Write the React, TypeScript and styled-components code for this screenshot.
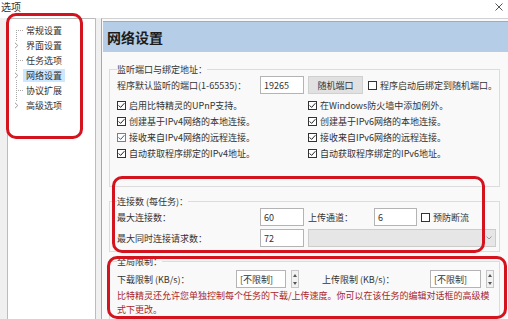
import React from "react";
import styled, { createGlobalStyle, css } from "styled-components";

const GlobalStyle = createGlobalStyle`
  html, body {
    margin: 0;
    padding: 0;
    background: #fff;
  }
  body {
    font-family: "Noto Sans CJK SC", "Noto Sans", sans-serif;
  }
`;

const Window = styled.div`
  position: relative;
  width: 508px;
  height: 319px;
  overflow: hidden;
  background: #f0f0f0;
  color: #222;
  font-size: 9px;
  font-family: "Noto Sans CJK SC", "Noto Sans", sans-serif;
`;

const TitleBar = styled.div`
  height: 18px;
  display: flex;
  justify-content: space-between;
  align-items: flex-start;
  padding: 1px 5px 0 1px;
  box-sizing: border-box;
  background: #fff;
`;

const TitleText = styled.span`
  font-size: 10px;
  line-height: 11px;
  color: #333;
`;

const CloseIcon = styled.svg`
  margin-top: 2px;
`;

const Body = styled.div`
  display: flex;
  gap: 5px;
  height: 301px;
  padding-left: 7px;
`;

const TreePanel = styled.div`
  width: 89px;
  flex: none;
  box-sizing: border-box;
  background: #fff;
  border: 1px solid #bcbcbc;
  border-bottom: none;
  padding-top: 4px;
`;

const TreeList = styled.ul`
  position: relative;
  list-style: none;
  margin: 0;
  padding: 0;
  color: #333;

  &::before {
    content: "";
    position: absolute;
    left: 8px;
    top: 7px;
    height: 75px;
    border-left: 1px dotted #a8a8a8;
  }
`;

const TreeItem = styled.li<{ $leaf?: boolean }>`
  position: relative;
  height: 15px;
  display: flex;
  align-items: center;
  padding-left: 15px;

  ${(p) =>
    p.$leaf &&
    css`
      &::before {
        content: "";
        position: absolute;
        left: 8px;
        top: 7px;
        width: 7px;
        border-top: 1px dotted #a8a8a8;
      }
    `}
`;

const Expander = styled.svg`
  position: absolute;
  left: 6px;
  top: 4px;
  background: #fff;
`;

const ItemText = styled.span<{ $selected?: boolean }>`
  padding: 0 3px;
  line-height: 13px;
  white-space: nowrap;
  background: ${(p) => (p.$selected ? "#cce8ff" : "transparent")};
`;

const RightPanel = styled.div`
  flex: 1;
  background: #f9f9f9;
  border-left: 1px solid #a9a9a9;
  border-top: 1px solid #d2d2d2;
  padding: 2px 0 0 1px;
`;

const Header = styled.div`
  height: 31px;
  box-sizing: border-box;
  display: flex;
  align-items: center;
  padding-left: 4px;
  background: #b6cde7;
  border-top: 1px solid #94adc8;
  font-size: 14px;
  font-weight: bold;
  color: #1b1b1b;
`;

const Content = styled.div`
  padding: 11px 8px 0 6px;
`;

const Group = styled.fieldset<{ $mt?: number; $pb?: number }>`
  margin: ${(p) => p.$mt ?? 0}px 0 0 0;
  padding: 0 0 ${(p) => p.$pb ?? 4}px 7px;
  min-width: 0;
  border: 1px solid #dcdcdc;
`;

const Legend = styled.legend`
  padding: 0;
  line-height: 13px;
  color: #333;
`;

const FormRow = styled.div<{ $mt?: number }>`
  display: flex;
  align-items: center;
  height: 18px;
  margin-top: ${(p) => p.$mt ?? 0}px;
`;

const Label = styled.span<{ $w: number; $ml?: number }>`
  width: ${(p) => p.$w}px;
  margin-left: ${(p) => p.$ml ?? 0}px;
  flex: none;
  white-space: nowrap;
  color: #333;
`;

const TextBox = styled.div<{ $w: number; $ml?: number }>`
  width: ${(p) => p.$w}px;
  margin-left: ${(p) => p.$ml ?? 0}px;
  height: 18px;
  flex: none;
  box-sizing: border-box;
  display: flex;
  align-items: center;
  padding-left: 3px;
  background: #fff;
  border: 1px solid #b4b4b4;
  color: #333;
`;

const PushButton = styled.div`
  width: 55px;
  height: 18px;
  margin-left: 4px;
  flex: none;
  box-sizing: border-box;
  display: flex;
  align-items: center;
  justify-content: center;
  background: #e1e1e1;
  border: 1px solid #d0d0d0;
  color: #333;
`;

const ComboBox = styled.div`
  width: 188px;
  height: 18px;
  margin-left: 4px;
  box-sizing: border-box;
  display: flex;
  align-items: center;
  justify-content: flex-end;
  padding-right: 3px;
  background: #e6e6e6;
  border: 1px solid #cccccc;
`;

const Spinner = styled.div`
  width: 8px;
  height: 18px;
  margin-left: 5px;
  flex: none;
  box-sizing: border-box;
  display: flex;
  flex-direction: column;
  align-items: center;
  justify-content: space-around;
  background: #f2f2f2;
  border: 1px solid #c6c6c6;
`;

const CheckGrid = styled.div`
  display: grid;
  grid-template-columns: 191px 1fr;
  grid-auto-rows: 16px;
  align-items: center;
  margin-top: 3px;
`;

const CheckItem = styled.label<{ $ml?: number }>`
  display: flex;
  align-items: center;
  gap: 3px;
  margin-left: ${(p) => p.$ml ?? 0}px;
  white-space: nowrap;
  color: #333;
`;

const Box = styled.span<{ $hot?: boolean }>`
  width: 9px;
  height: 9px;
  flex: none;
  box-sizing: border-box;
  display: flex;
  align-items: center;
  justify-content: center;
  background: #fff;
  border: 1px solid ${(p) => (p.$hot ? "#3c8fd6" : "#333")};
`;

const Note = styled.p`
  margin: 1px 0 0 0;
  line-height: 14px;
  color: #a8262b;
  white-space: nowrap;
`;

const Callout = styled.div<{ $x: number; $y: number; $w: number; $h: number }>`
  position: absolute;
  left: ${(p) => p.$x}px;
  top: ${(p) => p.$y}px;
  width: ${(p) => p.$w}px;
  height: ${(p) => p.$h}px;
  box-sizing: border-box;
  border: 3px solid #d3131d;
  border-radius: 10px;
  pointer-events: none;
`;

type CheckProps = { label: string; checked?: boolean; hot?: boolean; ml?: number };

const Check = ({ label, checked = true, hot, ml }: CheckProps) => (
  <CheckItem $ml={ml}>
    <Box $hot={hot}>
      {checked && (
        <svg width="7" height="7" viewBox="0 0 7 7">
          <path d="M0.6 3.4 L2.6 5.4 L6.4 1.2" fill="none" stroke={hot ? "#1f5f9e" : "#222"} strokeWidth="1" />
        </svg>
      )}
    </Box>
    {label}
  </CheckItem>
);

const SpinArrows = () => (
  <Spinner>
    <svg width="4" height="3" viewBox="0 0 4 3">
      <path d="M2 0 L4 3 L0 3 Z" fill="#555" />
    </svg>
    <svg width="4" height="3" viewBox="0 0 4 3">
      <path d="M0 0 L4 0 L2 3 Z" fill="#555" />
    </svg>
  </Spinner>
);

const Chevron = () => (
  <Expander width="5" height="7" viewBox="0 0 5 7">
    <path d="M1 0.8 L3.8 3.5 L1 6.2" fill="none" stroke="#9a9a9a" strokeWidth="1" />
  </Expander>
);

const treeItems = [
  { label: "常规设置", leaf: true },
  { label: "界面设置" },
  { label: "任务选项", leaf: true },
  { label: "网络设置", selected: true },
  { label: "协议扩展", leaf: true },
  { label: "高级选项" },
];

const checks = [
  ["启用比特精灵的UPnP支持。", "在Windows防火墙中添加例外。"],
  ["创建基于IPv4网络的本地连接。", "创建基于IPv6网络的本地连接。"],
  ["接收来自IPv4网络的远程连接。", "接收来自IPv6网络的远程连接。"],
  ["自动获取程序绑定的IPv4地址。", "自动获取程序绑定的IPv6地址。"],
];

export default function App() {
  return (
    <Window>
      <GlobalStyle />
      <TitleBar>
        <TitleText>选项</TitleText>
        <CloseIcon width="8" height="8" viewBox="0 0 8 8">
          <path d="M0.5 0.5 L7.5 7.5 M7.5 0.5 L0.5 7.5" stroke="#555" strokeWidth="1" />
        </CloseIcon>
      </TitleBar>
      <Body>
        <TreePanel>
          <TreeList>
            {treeItems.map((it) => (
              <TreeItem key={it.label} $leaf={it.leaf}>
                {!it.leaf && <Chevron />}
                <ItemText $selected={it.selected}>{it.label}</ItemText>
              </TreeItem>
            ))}
          </TreeList>
        </TreePanel>
        <RightPanel>
          <Header>网络设置</Header>
          <Content>
            <Group $pb={25}>
              <Legend>监听端口与绑定地址：</Legend>
              <FormRow>
                <Label $w={143}>程序默认监听的端口(1-65535)：</Label>
                <TextBox $w={44}>19265</TextBox>
                <PushButton>随机端口</PushButton>
                <Check label="程序启动后绑定到随机端口。" checked={false} ml={5} />
              </FormRow>
              <CheckGrid>
                {checks.map(([l, r], i) => (
                  <React.Fragment key={l}>
                    <Check label={l} hot={i === 2} />
                    <Check label={r} />
                  </React.Fragment>
                ))}
              </CheckGrid>
            </Group>

            <Group $mt={8}>
              <Legend>连接数 (每任务)：</Legend>
              <FormRow>
                <Label $w={143}>最大连接数：</Label>
                <TextBox $w={44}>60</TextBox>
                <Label $w={66} $ml={4}>上传通道：</Label>
                <TextBox $w={43}>6</TextBox>
                <Check label="预防断流" checked={false} ml={4} />
              </FormRow>
              <FormRow $mt={3}>
                <Label $w={143}>最大同时连接请求数：</Label>
                <TextBox $w={44}>72</TextBox>
                <ComboBox>
                  <svg width="6" height="4" viewBox="0 0 6 4">
                    <path d="M0.5 0.5 L3 3 L5.5 0.5" fill="none" stroke="#9a9a9a" strokeWidth="1" />
                  </svg>
                </ComboBox>
              </FormRow>
            </Group>

            <Group $mt={3}>
              <Legend>全局限制：</Legend>
              <FormRow $mt={2}>
                <Label $w={119}>下载限制 (KB/s)：</Label>
                <TextBox $w={50}>[不限制]</TextBox>
                <SpinArrows />
                <Label $w={108} $ml={23}>上传限制 (KB/s)：</Label>
                <TextBox $w={51}>[不限制]</TextBox>
                <SpinArrows />
              </FormRow>
              <Note>
                比特精灵还允许您单独控制每个任务的下载/上传速度。你可以在该任务的编辑对话框的高级模
                <br />
                式下更改。
              </Note>
            </Group>
          </Content>
        </RightPanel>
      </Body>

      <Callout $x={6} $y={13} $w={77} $h={126} />
      <Callout $x={112} $y={176} $w={373} $h={77} />
      <Callout $x={107} $y={256} $w={400} $h={63} />
    </Window>
  );
}
